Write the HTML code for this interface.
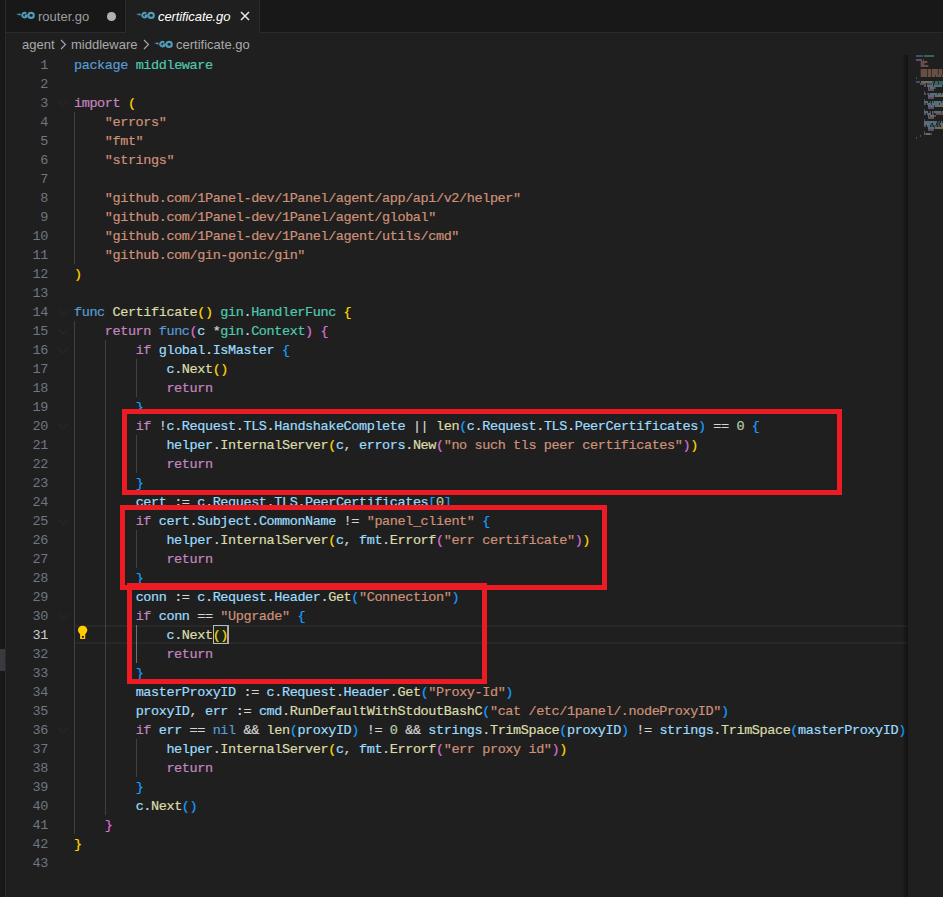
<!DOCTYPE html>
<html><head><meta charset="utf-8">
<style>
html,body{margin:0;padding:0}
body{width:943px;height:897px;overflow:hidden;background:#1f1f1f;position:relative;font-family:"Liberation Sans",sans-serif}
.abs{position:absolute}
#strip{position:absolute;left:0;top:0;width:5px;height:897px;background:#181818}
#stripb{position:absolute;left:5px;top:0;width:1px;height:897px;background:#2b2b2b}
#thumb{position:absolute;left:0;top:649px;width:5px;height:22px;background:#3a3a3e}
#tabs{position:absolute;left:6px;top:0;width:937px;height:32px;background:#181818;border-bottom:1px solid #2b2b2b}
.tab{position:absolute;top:0;height:33px;box-sizing:border-box;border-right:1px solid #2b2b2b}
#t1{left:6px;width:120px;background:#181818;height:32px}
#t2{left:126px;width:134px;background:#1f1f1f}
.tabtxt{position:absolute;top:9px;font-size:13px;line-height:15px;white-space:nowrap}
.go{position:absolute}
.bc{position:absolute;top:37px;font-size:13px;line-height:15px;color:#a9a9a9;white-space:nowrap}
.code{position:absolute;left:0;top:0;font-family:"Liberation Mono",monospace;font-size:13.5px;letter-spacing:-0.4px}
.ln{-webkit-text-stroke:0.2px currentColor;position:absolute;left:74px;height:19px;line-height:19px;white-space:pre;color:#d4d4d4}
.num{position:absolute;left:0;width:48px;text-align:right;height:19px;line-height:19px;color:#6e7681;font-family:"Liberation Mono",monospace;font-size:13.5px;letter-spacing:-0.4px}
.num.act{color:#cccccc}
.guide{position:absolute;width:1px;background:#404040}
.guide.ga{background:#707070}
.k{color:#569cd6}.c{color:#c586c0}.s{color:#ce9178}.f{color:#dcdcaa}.v{color:#9cdcfe}.t{color:#4ec9b0}.o{color:#d4d4d4}.n{color:#b5cea8}.b0{color:#ffd700}.b1{color:#da70d6}.b2{color:#179fff}
.box{position:absolute;border:5px solid #ed1c24;box-sizing:border-box}
</style></head><body>
<svg width="0" height="0" style="position:absolute"><defs><g id="goi"><path d="M0 3.1L4.6 2.5L4.4 4.7Z" fill="#519aba"/><path d="M10.2 2.5A2.35 2.35 0 1 0 10.75 5.1L10.75 4.4L8.7 4.4" stroke="#519aba" stroke-width="2" fill="none"/><ellipse cx="15.1" cy="4.4" rx="2.7" ry="2.5" stroke="#519aba" stroke-width="2.1" fill="none"/></g></defs></svg>
<div id="strip"></div><div id="thumb"></div><div id="stripb"></div>
<div id="tabs"></div>
<div class="tab" id="t1">
  <svg class="go" style="left:10px;top:11px" width="20" height="9" viewBox="0 0 20 9"><use href="#goi"/></svg>
  <div class="tabtxt" style="left:32px;color:#9d9d9d">router.go</div>
  <div class="abs" style="left:101px;top:12px;width:8.5px;height:8.5px;border-radius:50%;background:#b0b0b0"></div>
</div>
<div class="tab" id="t2">
  <svg class="go" style="left:10px;top:11px" width="20" height="9" viewBox="0 0 20 9"><use href="#goi"/></svg>
  <div class="tabtxt" style="left:32px;color:#ffffff;font-style:italic;letter-spacing:-0.1px">certificate.go</div>
  <svg class="abs" style="left:114px;top:11px" width="10" height="10" viewBox="0 0 10 10"><path d="M1 1L9 9M9 1L1 9" stroke="#e8e8e8" stroke-width="1.5"/></svg>
</div>
<div class="bc" style="left:22px">agent</div>
<svg class="abs" style="left:60px;top:39px" width="7" height="11" viewBox="0 0 7 11"><path d="M1 1l4.5 4.5L1 10" stroke="#a9a9a9" fill="none" stroke-width="1.1"/></svg>
<div class="bc" style="left:71px">middleware</div>
<svg class="abs" style="left:143px;top:39px" width="7" height="11" viewBox="0 0 7 11"><path d="M1 1l4.5 4.5L1 10" stroke="#a9a9a9" fill="none" stroke-width="1.1"/></svg>
<svg class="go" style="left:154px;top:40px" width="20" height="9" viewBox="0 0 20 9"><use href="#goi"/></svg>
<div class="bc" style="left:176px">certificate.go</div>

<!-- current line -->
<div class="abs" style="left:74px;top:625px;width:869px;height:19px;box-sizing:border-box;border-top:2px solid #282828;border-bottom:2px solid #282828"></div>
<div class="guide" style="left:74px;top:112px;height:152px"></div>
<div class="guide" style="left:74px;top:321px;height:513px"></div>
<div class="guide" style="left:105px;top:340px;height:475px"></div>
<div class="guide" style="left:136px;top:359px;height:38px"></div>
<div class="guide" style="left:136px;top:435px;height:38px"></div>
<div class="guide" style="left:136px;top:530px;height:38px"></div>
<div class="guide ga" style="left:136px;top:625px;height:38px"></div>
<div class="guide" style="left:136px;top:739px;height:38px"></div>
<svg class="abs" style="left:57px;top:100px" width="12" height="7" viewBox="0 0 12 7"><path d="M1 1l5 5 5-5" stroke="#272727" stroke-width="1.2" fill="none"/></svg>
<svg class="abs" style="left:57px;top:309px" width="12" height="7" viewBox="0 0 12 7"><path d="M1 1l5 5 5-5" stroke="#272727" stroke-width="1.2" fill="none"/></svg>
<svg class="abs" style="left:57px;top:328px" width="12" height="7" viewBox="0 0 12 7"><path d="M1 1l5 5 5-5" stroke="#272727" stroke-width="1.2" fill="none"/></svg>
<svg class="abs" style="left:57px;top:347px" width="12" height="7" viewBox="0 0 12 7"><path d="M1 1l5 5 5-5" stroke="#272727" stroke-width="1.2" fill="none"/></svg>
<svg class="abs" style="left:57px;top:423px" width="12" height="7" viewBox="0 0 12 7"><path d="M1 1l5 5 5-5" stroke="#272727" stroke-width="1.2" fill="none"/></svg>
<svg class="abs" style="left:57px;top:518px" width="12" height="7" viewBox="0 0 12 7"><path d="M1 1l5 5 5-5" stroke="#272727" stroke-width="1.2" fill="none"/></svg>
<svg class="abs" style="left:57px;top:613px" width="12" height="7" viewBox="0 0 12 7"><path d="M1 1l5 5 5-5" stroke="#272727" stroke-width="1.2" fill="none"/></svg>
<svg class="abs" style="left:57px;top:727px" width="12" height="7" viewBox="0 0 12 7"><path d="M1 1l5 5 5-5" stroke="#272727" stroke-width="1.2" fill="none"/></svg>
<div class="abs" style="left:213px;top:625px;width:15px;height:19px;box-sizing:border-box;border:1px solid #b9b9b9;background:rgba(0,100,0,0.1)"></div>
<div class="code">
<div class="num" style="top:56px">1</div>
<div class="num" style="top:75px">2</div>
<div class="num" style="top:94px">3</div>
<div class="num" style="top:113px">4</div>
<div class="num" style="top:132px">5</div>
<div class="num" style="top:151px">6</div>
<div class="num" style="top:170px">7</div>
<div class="num" style="top:189px">8</div>
<div class="num" style="top:208px">9</div>
<div class="num" style="top:227px">10</div>
<div class="num" style="top:246px">11</div>
<div class="num" style="top:265px">12</div>
<div class="num" style="top:284px">13</div>
<div class="num" style="top:303px">14</div>
<div class="num" style="top:322px">15</div>
<div class="num" style="top:341px">16</div>
<div class="num" style="top:360px">17</div>
<div class="num" style="top:379px">18</div>
<div class="num" style="top:398px">19</div>
<div class="num" style="top:417px">20</div>
<div class="num" style="top:436px">21</div>
<div class="num" style="top:455px">22</div>
<div class="num" style="top:474px">23</div>
<div class="num" style="top:493px">24</div>
<div class="num" style="top:512px">25</div>
<div class="num" style="top:531px">26</div>
<div class="num" style="top:550px">27</div>
<div class="num" style="top:569px">28</div>
<div class="num" style="top:588px">29</div>
<div class="num" style="top:607px">30</div>
<div class="num act" style="top:626px">31</div>
<div class="num" style="top:645px">32</div>
<div class="num" style="top:664px">33</div>
<div class="num" style="top:683px">34</div>
<div class="num" style="top:702px">35</div>
<div class="num" style="top:721px">36</div>
<div class="num" style="top:740px">37</div>
<div class="num" style="top:759px">38</div>
<div class="num" style="top:778px">39</div>
<div class="num" style="top:797px">40</div>
<div class="num" style="top:816px">41</div>
<div class="num" style="top:835px">42</div>
<div class="num" style="top:854px">43</div>
<div class="ln" style="top:56px"><span class="k">package</span> <span class="t">middleware</span></div>
<div class="ln" style="top:75px"></div>
<div class="ln" style="top:94px"><span class="c">import</span> <span class="b0">(</span></div>
<div class="ln" style="top:113px">    <span class="s">"errors"</span></div>
<div class="ln" style="top:132px">    <span class="s">"fmt"</span></div>
<div class="ln" style="top:151px">    <span class="s">"strings"</span></div>
<div class="ln" style="top:170px"></div>
<div class="ln" style="top:189px">    <span class="s">"github.com/1Panel-dev/1Panel/agent/app/api/v2/helper"</span></div>
<div class="ln" style="top:208px">    <span class="s">"github.com/1Panel-dev/1Panel/agent/global"</span></div>
<div class="ln" style="top:227px">    <span class="s">"github.com/1Panel-dev/1Panel/agent/utils/cmd"</span></div>
<div class="ln" style="top:246px">    <span class="s">"github.com/gin-gonic/gin"</span></div>
<div class="ln" style="top:265px"><span class="b0">)</span></div>
<div class="ln" style="top:284px"></div>
<div class="ln" style="top:303px"><span class="k">func</span> <span class="f">Certificate</span><span class="b0">(</span><span class="b0">)</span> <span class="t">gin</span><span class="o">.</span><span class="t">HandlerFunc</span> <span class="b0">{</span></div>
<div class="ln" style="top:322px">    <span class="c">return</span> <span class="k">func</span><span class="b1">(</span><span class="v">c</span> <span class="o">*</span><span class="t">gin</span><span class="o">.</span><span class="t">Context</span><span class="b1">)</span> <span class="b1">{</span></div>
<div class="ln" style="top:341px">        <span class="c">if</span> <span class="v">global</span><span class="o">.</span><span class="v">IsMaster</span> <span class="b2">{</span></div>
<div class="ln" style="top:360px">            <span class="v">c</span><span class="o">.</span><span class="f">Next</span><span class="b0">(</span><span class="b0">)</span></div>
<div class="ln" style="top:379px">            <span class="c">return</span></div>
<div class="ln" style="top:398px">        <span class="b2">}</span></div>
<div class="ln" style="top:417px">        <span class="c">if</span> <span class="o">!</span><span class="v">c</span><span class="o">.</span><span class="v">Request</span><span class="o">.</span><span class="v">TLS</span><span class="o">.</span><span class="v">HandshakeComplete</span> <span class="o">||</span> <span class="f">len</span><span class="b2">(</span><span class="v">c</span><span class="o">.</span><span class="v">Request</span><span class="o">.</span><span class="v">TLS</span><span class="o">.</span><span class="v">PeerCertificates</span><span class="b2">)</span> <span class="o">==</span> <span class="n">0</span> <span class="b2">{</span></div>
<div class="ln" style="top:436px">            <span class="v">helper</span><span class="o">.</span><span class="f">InternalServer</span><span class="b0">(</span><span class="v">c</span><span class="o">,</span> <span class="v">errors</span><span class="o">.</span><span class="f">New</span><span class="b1">(</span><span class="s">"no such tls peer certificates"</span><span class="b1">)</span><span class="b0">)</span></div>
<div class="ln" style="top:455px">            <span class="c">return</span></div>
<div class="ln" style="top:474px">        <span class="b2">}</span></div>
<div class="ln" style="top:493px">        <span class="v">cert</span> <span class="o">:=</span> <span class="v">c</span><span class="o">.</span><span class="v">Request</span><span class="o">.</span><span class="v">TLS</span><span class="o">.</span><span class="v">PeerCertificates</span><span class="b2">[</span><span class="n">0</span><span class="b2">]</span></div>
<div class="ln" style="top:512px">        <span class="c">if</span> <span class="v">cert</span><span class="o">.</span><span class="v">Subject</span><span class="o">.</span><span class="v">CommonName</span> <span class="o">!=</span> <span class="s">"panel_client"</span> <span class="b2">{</span></div>
<div class="ln" style="top:531px">            <span class="v">helper</span><span class="o">.</span><span class="f">InternalServer</span><span class="b0">(</span><span class="v">c</span><span class="o">,</span> <span class="v">fmt</span><span class="o">.</span><span class="f">Errorf</span><span class="b1">(</span><span class="s">"err certificate"</span><span class="b1">)</span><span class="b0">)</span></div>
<div class="ln" style="top:550px">            <span class="c">return</span></div>
<div class="ln" style="top:569px">        <span class="b2">}</span></div>
<div class="ln" style="top:588px">        <span class="v">conn</span> <span class="o">:=</span> <span class="v">c</span><span class="o">.</span><span class="v">Request</span><span class="o">.</span><span class="v">Header</span><span class="o">.</span><span class="f">Get</span><span class="b2">(</span><span class="s">"Connection"</span><span class="b2">)</span></div>
<div class="ln" style="top:607px">        <span class="c">if</span> <span class="v">conn</span> <span class="o">==</span> <span class="s">"Upgrade"</span> <span class="b2">{</span></div>
<div class="ln" style="top:626px">            <span class="v">c</span><span class="o">.</span><span class="f">Next</span><span class="b0">(</span><span class="b0">)</span></div>
<div class="ln" style="top:645px">            <span class="c">return</span></div>
<div class="ln" style="top:664px">        <span class="b2">}</span></div>
<div class="ln" style="top:683px">        <span class="v">masterProxyID</span> <span class="o">:=</span> <span class="v">c</span><span class="o">.</span><span class="v">Request</span><span class="o">.</span><span class="v">Header</span><span class="o">.</span><span class="f">Get</span><span class="b2">(</span><span class="s">"Proxy-Id"</span><span class="b2">)</span></div>
<div class="ln" style="top:702px">        <span class="v">proxyID</span><span class="o">,</span> <span class="v">err</span> <span class="o">:=</span> <span class="v">cmd</span><span class="o">.</span><span class="f">RunDefaultWithStdoutBashC</span><span class="b2">(</span><span class="s">"cat /etc/1panel/.nodeProxyID"</span><span class="b2">)</span></div>
<div class="ln" style="top:721px">        <span class="c">if</span> <span class="v">err</span> <span class="o">==</span> <span class="k">nil</span> <span class="o">&amp;&amp;</span> <span class="f">len</span><span class="b2">(</span><span class="v">proxyID</span><span class="b2">)</span> <span class="o">!=</span> <span class="n">0</span> <span class="o">&amp;&amp;</span> <span class="v">strings</span><span class="o">.</span><span class="f">TrimSpace</span><span class="b2">(</span><span class="v">proxyID</span><span class="b2">)</span> <span class="o">!=</span> <span class="v">strings</span><span class="o">.</span><span class="f">TrimSpace</span><span class="b2">(</span><span class="v">masterProxyID</span><span class="b2">)</span> <span class="b2">{</span></div>
<div class="ln" style="top:740px">            <span class="v">helper</span><span class="o">.</span><span class="f">InternalServer</span><span class="b0">(</span><span class="v">c</span><span class="o">,</span> <span class="v">fmt</span><span class="o">.</span><span class="f">Errorf</span><span class="b1">(</span><span class="s">"err proxy id"</span><span class="b1">)</span><span class="b0">)</span></div>
<div class="ln" style="top:759px">            <span class="c">return</span></div>
<div class="ln" style="top:778px">        <span class="b2">}</span></div>
<div class="ln" style="top:797px">        <span class="v">c</span><span class="o">.</span><span class="f">Next</span><span class="b2">(</span><span class="b2">)</span></div>
<div class="ln" style="top:816px">    <span class="b1">}</span></div>
<div class="ln" style="top:835px"><span class="b0">}</span></div>
<div class="ln" style="top:854px"></div>
</div>
<div class="abs" style="left:227px;top:625px;width:2px;height:19px;background:#aeafad"></div>
<svg class="abs" style="left:77px;top:625px" width="11" height="15" viewBox="0 0 11 15"><ellipse cx="5.6" cy="5.1" rx="4.7" ry="4.3" fill="#ffcc00"/><path fill="#ffcc00" fill-rule="evenodd" d="M3.1 7H8.2V14H3.1Z M4.9 11H6.9V12.8H4.9Z"/></svg>
<!-- minimap -->
<div class="abs" style="left:908px;top:55px;width:35px;height:842px;background:#1f1f1f"></div>
<div class="abs" style="left:902px;top:55px;width:6px;height:842px;background:linear-gradient(to right,rgba(0,0,0,0),rgba(0,0,0,0.45))"></div>
<svg class="abs" style="left:0;top:0" width="943" height="897" viewBox="0 0 943 897"><g opacity="0.42"><rect x="916" y="55" width="1" height="2" fill="#569cd6" fill-opacity="1.00"/><rect x="917" y="55" width="1" height="2" fill="#569cd6" fill-opacity="1.00"/><rect x="918" y="55" width="1" height="2" fill="#569cd6" fill-opacity="1.00"/><rect x="919" y="55" width="1" height="2" fill="#569cd6" fill-opacity="1.00"/><rect x="920" y="55" width="1" height="2" fill="#569cd6" fill-opacity="1.00"/><rect x="921" y="55" width="1" height="2" fill="#569cd6" fill-opacity="1.00"/><rect x="922" y="55" width="1" height="2" fill="#569cd6" fill-opacity="1.00"/><rect x="924" y="55" width="1" height="2" fill="#4ec9b0" fill-opacity="1.00"/><rect x="925" y="55" width="1" height="2" fill="#4ec9b0" fill-opacity="1.00"/><rect x="926" y="55" width="1" height="2" fill="#4ec9b0" fill-opacity="1.00"/><rect x="927" y="55" width="1" height="2" fill="#4ec9b0" fill-opacity="1.00"/><rect x="928" y="55" width="1" height="2" fill="#4ec9b0" fill-opacity="1.00"/><rect x="929" y="55" width="1" height="2" fill="#4ec9b0" fill-opacity="1.00"/><rect x="930" y="55" width="1" height="2" fill="#4ec9b0" fill-opacity="1.00"/><rect x="931" y="55" width="1" height="2" fill="#4ec9b0" fill-opacity="1.00"/><rect x="932" y="55" width="1" height="2" fill="#4ec9b0" fill-opacity="1.00"/><rect x="933" y="55" width="1" height="2" fill="#4ec9b0" fill-opacity="1.00"/><rect x="916" y="59" width="1" height="2" fill="#c586c0" fill-opacity="1.00"/><rect x="917" y="59" width="1" height="2" fill="#c586c0" fill-opacity="1.00"/><rect x="918" y="59" width="1" height="2" fill="#c586c0" fill-opacity="1.00"/><rect x="919" y="59" width="1" height="2" fill="#c586c0" fill-opacity="1.00"/><rect x="920" y="59" width="1" height="2" fill="#c586c0" fill-opacity="1.00"/><rect x="921" y="59" width="1" height="2" fill="#c586c0" fill-opacity="1.00"/><rect x="923" y="59" width="1" height="2" fill="#d4d4d4" fill-opacity="0.60"/><rect x="920" y="61" width="1" height="2" fill="#ce9178" fill-opacity="0.35"/><rect x="921" y="61" width="1" height="2" fill="#ce9178" fill-opacity="1.00"/><rect x="922" y="61" width="1" height="2" fill="#ce9178" fill-opacity="1.00"/><rect x="923" y="61" width="1" height="2" fill="#ce9178" fill-opacity="1.00"/><rect x="924" y="61" width="1" height="2" fill="#ce9178" fill-opacity="1.00"/><rect x="925" y="61" width="1" height="2" fill="#ce9178" fill-opacity="1.00"/><rect x="926" y="61" width="1" height="2" fill="#ce9178" fill-opacity="1.00"/><rect x="927" y="61" width="1" height="2" fill="#ce9178" fill-opacity="0.35"/><rect x="920" y="63" width="1" height="2" fill="#ce9178" fill-opacity="0.35"/><rect x="921" y="63" width="1" height="2" fill="#ce9178" fill-opacity="1.00"/><rect x="922" y="63" width="1" height="2" fill="#ce9178" fill-opacity="1.00"/><rect x="923" y="63" width="1" height="2" fill="#ce9178" fill-opacity="1.00"/><rect x="924" y="63" width="1" height="2" fill="#ce9178" fill-opacity="0.35"/><rect x="920" y="65" width="1" height="2" fill="#ce9178" fill-opacity="0.35"/><rect x="921" y="65" width="1" height="2" fill="#ce9178" fill-opacity="1.00"/><rect x="922" y="65" width="1" height="2" fill="#ce9178" fill-opacity="1.00"/><rect x="923" y="65" width="1" height="2" fill="#ce9178" fill-opacity="1.00"/><rect x="924" y="65" width="1" height="2" fill="#ce9178" fill-opacity="1.00"/><rect x="925" y="65" width="1" height="2" fill="#ce9178" fill-opacity="1.00"/><rect x="926" y="65" width="1" height="2" fill="#ce9178" fill-opacity="1.00"/><rect x="927" y="65" width="1" height="2" fill="#ce9178" fill-opacity="1.00"/><rect x="928" y="65" width="1" height="2" fill="#ce9178" fill-opacity="0.35"/><rect x="920" y="69" width="1" height="2" fill="#ce9178" fill-opacity="0.35"/><rect x="921" y="69" width="1" height="2" fill="#ce9178" fill-opacity="1.00"/><rect x="922" y="69" width="1" height="2" fill="#ce9178" fill-opacity="1.00"/><rect x="923" y="69" width="1" height="2" fill="#ce9178" fill-opacity="1.00"/><rect x="924" y="69" width="1" height="2" fill="#ce9178" fill-opacity="1.00"/><rect x="925" y="69" width="1" height="2" fill="#ce9178" fill-opacity="1.00"/><rect x="926" y="69" width="1" height="2" fill="#ce9178" fill-opacity="1.00"/><rect x="927" y="69" width="1" height="2" fill="#ce9178" fill-opacity="0.35"/><rect x="928" y="69" width="1" height="2" fill="#ce9178" fill-opacity="1.00"/><rect x="929" y="69" width="1" height="2" fill="#ce9178" fill-opacity="1.00"/><rect x="930" y="69" width="1" height="2" fill="#ce9178" fill-opacity="1.00"/><rect x="931" y="69" width="1" height="2" fill="#ce9178" fill-opacity="0.35"/><rect x="932" y="69" width="1" height="2" fill="#ce9178" fill-opacity="1.00"/><rect x="933" y="69" width="1" height="2" fill="#ce9178" fill-opacity="1.00"/><rect x="934" y="69" width="1" height="2" fill="#ce9178" fill-opacity="1.00"/><rect x="935" y="69" width="1" height="2" fill="#ce9178" fill-opacity="1.00"/><rect x="936" y="69" width="1" height="2" fill="#ce9178" fill-opacity="1.00"/><rect x="937" y="69" width="1" height="2" fill="#ce9178" fill-opacity="1.00"/><rect x="938" y="69" width="1" height="2" fill="#ce9178" fill-opacity="0.35"/><rect x="939" y="69" width="1" height="2" fill="#ce9178" fill-opacity="1.00"/><rect x="940" y="69" width="1" height="2" fill="#ce9178" fill-opacity="1.00"/><rect x="941" y="69" width="1" height="2" fill="#ce9178" fill-opacity="1.00"/><rect x="942" y="69" width="1" height="2" fill="#ce9178" fill-opacity="0.35"/><rect x="920" y="71" width="1" height="2" fill="#ce9178" fill-opacity="0.35"/><rect x="921" y="71" width="1" height="2" fill="#ce9178" fill-opacity="1.00"/><rect x="922" y="71" width="1" height="2" fill="#ce9178" fill-opacity="1.00"/><rect x="923" y="71" width="1" height="2" fill="#ce9178" fill-opacity="1.00"/><rect x="924" y="71" width="1" height="2" fill="#ce9178" fill-opacity="1.00"/><rect x="925" y="71" width="1" height="2" fill="#ce9178" fill-opacity="1.00"/><rect x="926" y="71" width="1" height="2" fill="#ce9178" fill-opacity="1.00"/><rect x="927" y="71" width="1" height="2" fill="#ce9178" fill-opacity="0.35"/><rect x="928" y="71" width="1" height="2" fill="#ce9178" fill-opacity="1.00"/><rect x="929" y="71" width="1" height="2" fill="#ce9178" fill-opacity="1.00"/><rect x="930" y="71" width="1" height="2" fill="#ce9178" fill-opacity="1.00"/><rect x="931" y="71" width="1" height="2" fill="#ce9178" fill-opacity="0.35"/><rect x="932" y="71" width="1" height="2" fill="#ce9178" fill-opacity="1.00"/><rect x="933" y="71" width="1" height="2" fill="#ce9178" fill-opacity="1.00"/><rect x="934" y="71" width="1" height="2" fill="#ce9178" fill-opacity="1.00"/><rect x="935" y="71" width="1" height="2" fill="#ce9178" fill-opacity="1.00"/><rect x="936" y="71" width="1" height="2" fill="#ce9178" fill-opacity="1.00"/><rect x="937" y="71" width="1" height="2" fill="#ce9178" fill-opacity="1.00"/><rect x="938" y="71" width="1" height="2" fill="#ce9178" fill-opacity="0.35"/><rect x="939" y="71" width="1" height="2" fill="#ce9178" fill-opacity="1.00"/><rect x="940" y="71" width="1" height="2" fill="#ce9178" fill-opacity="1.00"/><rect x="941" y="71" width="1" height="2" fill="#ce9178" fill-opacity="1.00"/><rect x="942" y="71" width="1" height="2" fill="#ce9178" fill-opacity="0.35"/><rect x="920" y="73" width="1" height="2" fill="#ce9178" fill-opacity="0.35"/><rect x="921" y="73" width="1" height="2" fill="#ce9178" fill-opacity="1.00"/><rect x="922" y="73" width="1" height="2" fill="#ce9178" fill-opacity="1.00"/><rect x="923" y="73" width="1" height="2" fill="#ce9178" fill-opacity="1.00"/><rect x="924" y="73" width="1" height="2" fill="#ce9178" fill-opacity="1.00"/><rect x="925" y="73" width="1" height="2" fill="#ce9178" fill-opacity="1.00"/><rect x="926" y="73" width="1" height="2" fill="#ce9178" fill-opacity="1.00"/><rect x="927" y="73" width="1" height="2" fill="#ce9178" fill-opacity="0.35"/><rect x="928" y="73" width="1" height="2" fill="#ce9178" fill-opacity="1.00"/><rect x="929" y="73" width="1" height="2" fill="#ce9178" fill-opacity="1.00"/><rect x="930" y="73" width="1" height="2" fill="#ce9178" fill-opacity="1.00"/><rect x="931" y="73" width="1" height="2" fill="#ce9178" fill-opacity="0.35"/><rect x="932" y="73" width="1" height="2" fill="#ce9178" fill-opacity="1.00"/><rect x="933" y="73" width="1" height="2" fill="#ce9178" fill-opacity="1.00"/><rect x="934" y="73" width="1" height="2" fill="#ce9178" fill-opacity="1.00"/><rect x="935" y="73" width="1" height="2" fill="#ce9178" fill-opacity="1.00"/><rect x="936" y="73" width="1" height="2" fill="#ce9178" fill-opacity="1.00"/><rect x="937" y="73" width="1" height="2" fill="#ce9178" fill-opacity="1.00"/><rect x="938" y="73" width="1" height="2" fill="#ce9178" fill-opacity="0.35"/><rect x="939" y="73" width="1" height="2" fill="#ce9178" fill-opacity="1.00"/><rect x="940" y="73" width="1" height="2" fill="#ce9178" fill-opacity="1.00"/><rect x="941" y="73" width="1" height="2" fill="#ce9178" fill-opacity="1.00"/><rect x="942" y="73" width="1" height="2" fill="#ce9178" fill-opacity="0.35"/><rect x="920" y="75" width="1" height="2" fill="#ce9178" fill-opacity="0.35"/><rect x="921" y="75" width="1" height="2" fill="#ce9178" fill-opacity="1.00"/><rect x="922" y="75" width="1" height="2" fill="#ce9178" fill-opacity="1.00"/><rect x="923" y="75" width="1" height="2" fill="#ce9178" fill-opacity="1.00"/><rect x="924" y="75" width="1" height="2" fill="#ce9178" fill-opacity="1.00"/><rect x="925" y="75" width="1" height="2" fill="#ce9178" fill-opacity="1.00"/><rect x="926" y="75" width="1" height="2" fill="#ce9178" fill-opacity="1.00"/><rect x="927" y="75" width="1" height="2" fill="#ce9178" fill-opacity="0.35"/><rect x="928" y="75" width="1" height="2" fill="#ce9178" fill-opacity="1.00"/><rect x="929" y="75" width="1" height="2" fill="#ce9178" fill-opacity="1.00"/><rect x="930" y="75" width="1" height="2" fill="#ce9178" fill-opacity="1.00"/><rect x="931" y="75" width="1" height="2" fill="#ce9178" fill-opacity="0.35"/><rect x="932" y="75" width="1" height="2" fill="#ce9178" fill-opacity="1.00"/><rect x="933" y="75" width="1" height="2" fill="#ce9178" fill-opacity="1.00"/><rect x="934" y="75" width="1" height="2" fill="#ce9178" fill-opacity="1.00"/><rect x="935" y="75" width="1" height="2" fill="#ce9178" fill-opacity="0.35"/><rect x="936" y="75" width="1" height="2" fill="#ce9178" fill-opacity="1.00"/><rect x="937" y="75" width="1" height="2" fill="#ce9178" fill-opacity="1.00"/><rect x="938" y="75" width="1" height="2" fill="#ce9178" fill-opacity="1.00"/><rect x="939" y="75" width="1" height="2" fill="#ce9178" fill-opacity="1.00"/><rect x="940" y="75" width="1" height="2" fill="#ce9178" fill-opacity="1.00"/><rect x="941" y="75" width="1" height="2" fill="#ce9178" fill-opacity="0.35"/><rect x="942" y="75" width="1" height="2" fill="#ce9178" fill-opacity="1.00"/><rect x="916" y="77" width="1" height="2" fill="#d4d4d4" fill-opacity="0.60"/><rect x="916" y="81" width="1" height="2" fill="#569cd6" fill-opacity="1.00"/><rect x="917" y="81" width="1" height="2" fill="#569cd6" fill-opacity="1.00"/><rect x="918" y="81" width="1" height="2" fill="#569cd6" fill-opacity="1.00"/><rect x="919" y="81" width="1" height="2" fill="#569cd6" fill-opacity="1.00"/><rect x="921" y="81" width="1" height="2" fill="#dcdcaa" fill-opacity="1.00"/><rect x="922" y="81" width="1" height="2" fill="#dcdcaa" fill-opacity="1.00"/><rect x="923" y="81" width="1" height="2" fill="#dcdcaa" fill-opacity="1.00"/><rect x="924" y="81" width="1" height="2" fill="#dcdcaa" fill-opacity="1.00"/><rect x="925" y="81" width="1" height="2" fill="#dcdcaa" fill-opacity="1.00"/><rect x="926" y="81" width="1" height="2" fill="#dcdcaa" fill-opacity="1.00"/><rect x="927" y="81" width="1" height="2" fill="#dcdcaa" fill-opacity="1.00"/><rect x="928" y="81" width="1" height="2" fill="#dcdcaa" fill-opacity="1.00"/><rect x="929" y="81" width="1" height="2" fill="#dcdcaa" fill-opacity="1.00"/><rect x="930" y="81" width="1" height="2" fill="#dcdcaa" fill-opacity="1.00"/><rect x="931" y="81" width="1" height="2" fill="#dcdcaa" fill-opacity="1.00"/><rect x="932" y="81" width="1" height="2" fill="#d4d4d4" fill-opacity="0.60"/><rect x="933" y="81" width="1" height="2" fill="#d4d4d4" fill-opacity="0.60"/><rect x="935" y="81" width="1" height="2" fill="#4ec9b0" fill-opacity="1.00"/><rect x="936" y="81" width="1" height="2" fill="#4ec9b0" fill-opacity="1.00"/><rect x="937" y="81" width="1" height="2" fill="#4ec9b0" fill-opacity="1.00"/><rect x="938" y="81" width="1" height="2" fill="#d4d4d4" fill-opacity="0.35"/><rect x="939" y="81" width="1" height="2" fill="#4ec9b0" fill-opacity="1.00"/><rect x="940" y="81" width="1" height="2" fill="#4ec9b0" fill-opacity="1.00"/><rect x="941" y="81" width="1" height="2" fill="#4ec9b0" fill-opacity="1.00"/><rect x="942" y="81" width="1" height="2" fill="#4ec9b0" fill-opacity="1.00"/><rect x="920" y="83" width="1" height="2" fill="#c586c0" fill-opacity="1.00"/><rect x="921" y="83" width="1" height="2" fill="#c586c0" fill-opacity="1.00"/><rect x="922" y="83" width="1" height="2" fill="#c586c0" fill-opacity="1.00"/><rect x="923" y="83" width="1" height="2" fill="#c586c0" fill-opacity="1.00"/><rect x="924" y="83" width="1" height="2" fill="#c586c0" fill-opacity="1.00"/><rect x="925" y="83" width="1" height="2" fill="#c586c0" fill-opacity="1.00"/><rect x="927" y="83" width="1" height="2" fill="#569cd6" fill-opacity="1.00"/><rect x="928" y="83" width="1" height="2" fill="#569cd6" fill-opacity="1.00"/><rect x="929" y="83" width="1" height="2" fill="#569cd6" fill-opacity="1.00"/><rect x="930" y="83" width="1" height="2" fill="#569cd6" fill-opacity="1.00"/><rect x="931" y="83" width="1" height="2" fill="#d4d4d4" fill-opacity="0.60"/><rect x="932" y="83" width="1" height="2" fill="#9cdcfe" fill-opacity="1.00"/><rect x="934" y="83" width="1" height="2" fill="#d4d4d4" fill-opacity="0.60"/><rect x="935" y="83" width="1" height="2" fill="#4ec9b0" fill-opacity="1.00"/><rect x="936" y="83" width="1" height="2" fill="#4ec9b0" fill-opacity="1.00"/><rect x="937" y="83" width="1" height="2" fill="#4ec9b0" fill-opacity="1.00"/><rect x="938" y="83" width="1" height="2" fill="#d4d4d4" fill-opacity="0.35"/><rect x="939" y="83" width="1" height="2" fill="#4ec9b0" fill-opacity="1.00"/><rect x="940" y="83" width="1" height="2" fill="#4ec9b0" fill-opacity="1.00"/><rect x="941" y="83" width="1" height="2" fill="#4ec9b0" fill-opacity="1.00"/><rect x="942" y="83" width="1" height="2" fill="#4ec9b0" fill-opacity="1.00"/><rect x="924" y="85" width="1" height="2" fill="#c586c0" fill-opacity="1.00"/><rect x="925" y="85" width="1" height="2" fill="#c586c0" fill-opacity="1.00"/><rect x="927" y="85" width="1" height="2" fill="#9cdcfe" fill-opacity="1.00"/><rect x="928" y="85" width="1" height="2" fill="#9cdcfe" fill-opacity="1.00"/><rect x="929" y="85" width="1" height="2" fill="#9cdcfe" fill-opacity="1.00"/><rect x="930" y="85" width="1" height="2" fill="#9cdcfe" fill-opacity="1.00"/><rect x="931" y="85" width="1" height="2" fill="#9cdcfe" fill-opacity="1.00"/><rect x="932" y="85" width="1" height="2" fill="#9cdcfe" fill-opacity="1.00"/><rect x="933" y="85" width="1" height="2" fill="#d4d4d4" fill-opacity="0.35"/><rect x="934" y="85" width="1" height="2" fill="#9cdcfe" fill-opacity="1.00"/><rect x="935" y="85" width="1" height="2" fill="#9cdcfe" fill-opacity="1.00"/><rect x="936" y="85" width="1" height="2" fill="#9cdcfe" fill-opacity="1.00"/><rect x="937" y="85" width="1" height="2" fill="#9cdcfe" fill-opacity="1.00"/><rect x="938" y="85" width="1" height="2" fill="#9cdcfe" fill-opacity="1.00"/><rect x="939" y="85" width="1" height="2" fill="#9cdcfe" fill-opacity="1.00"/><rect x="940" y="85" width="1" height="2" fill="#9cdcfe" fill-opacity="1.00"/><rect x="941" y="85" width="1" height="2" fill="#9cdcfe" fill-opacity="1.00"/><rect x="928" y="87" width="1" height="2" fill="#9cdcfe" fill-opacity="1.00"/><rect x="929" y="87" width="1" height="2" fill="#d4d4d4" fill-opacity="0.35"/><rect x="930" y="87" width="1" height="2" fill="#dcdcaa" fill-opacity="1.00"/><rect x="931" y="87" width="1" height="2" fill="#dcdcaa" fill-opacity="1.00"/><rect x="932" y="87" width="1" height="2" fill="#dcdcaa" fill-opacity="1.00"/><rect x="933" y="87" width="1" height="2" fill="#dcdcaa" fill-opacity="1.00"/><rect x="934" y="87" width="1" height="2" fill="#d4d4d4" fill-opacity="0.60"/><rect x="935" y="87" width="1" height="2" fill="#d4d4d4" fill-opacity="0.60"/><rect x="928" y="89" width="1" height="2" fill="#c586c0" fill-opacity="1.00"/><rect x="929" y="89" width="1" height="2" fill="#c586c0" fill-opacity="1.00"/><rect x="930" y="89" width="1" height="2" fill="#c586c0" fill-opacity="1.00"/><rect x="931" y="89" width="1" height="2" fill="#c586c0" fill-opacity="1.00"/><rect x="932" y="89" width="1" height="2" fill="#c586c0" fill-opacity="1.00"/><rect x="933" y="89" width="1" height="2" fill="#c586c0" fill-opacity="1.00"/><rect x="924" y="91" width="1" height="2" fill="#d4d4d4" fill-opacity="0.60"/><rect x="924" y="93" width="1" height="2" fill="#c586c0" fill-opacity="1.00"/><rect x="925" y="93" width="1" height="2" fill="#c586c0" fill-opacity="1.00"/><rect x="927" y="93" width="1" height="2" fill="#d4d4d4" fill-opacity="0.60"/><rect x="928" y="93" width="1" height="2" fill="#9cdcfe" fill-opacity="1.00"/><rect x="929" y="93" width="1" height="2" fill="#d4d4d4" fill-opacity="0.35"/><rect x="930" y="93" width="1" height="2" fill="#9cdcfe" fill-opacity="1.00"/><rect x="931" y="93" width="1" height="2" fill="#9cdcfe" fill-opacity="1.00"/><rect x="932" y="93" width="1" height="2" fill="#9cdcfe" fill-opacity="1.00"/><rect x="933" y="93" width="1" height="2" fill="#9cdcfe" fill-opacity="1.00"/><rect x="934" y="93" width="1" height="2" fill="#9cdcfe" fill-opacity="1.00"/><rect x="935" y="93" width="1" height="2" fill="#9cdcfe" fill-opacity="1.00"/><rect x="936" y="93" width="1" height="2" fill="#9cdcfe" fill-opacity="1.00"/><rect x="937" y="93" width="1" height="2" fill="#d4d4d4" fill-opacity="0.35"/><rect x="938" y="93" width="1" height="2" fill="#9cdcfe" fill-opacity="1.00"/><rect x="939" y="93" width="1" height="2" fill="#9cdcfe" fill-opacity="1.00"/><rect x="940" y="93" width="1" height="2" fill="#9cdcfe" fill-opacity="1.00"/><rect x="941" y="93" width="1" height="2" fill="#d4d4d4" fill-opacity="0.35"/><rect x="942" y="93" width="1" height="2" fill="#9cdcfe" fill-opacity="1.00"/><rect x="928" y="95" width="1" height="2" fill="#9cdcfe" fill-opacity="1.00"/><rect x="929" y="95" width="1" height="2" fill="#9cdcfe" fill-opacity="1.00"/><rect x="930" y="95" width="1" height="2" fill="#9cdcfe" fill-opacity="1.00"/><rect x="931" y="95" width="1" height="2" fill="#9cdcfe" fill-opacity="1.00"/><rect x="932" y="95" width="1" height="2" fill="#9cdcfe" fill-opacity="1.00"/><rect x="933" y="95" width="1" height="2" fill="#9cdcfe" fill-opacity="1.00"/><rect x="934" y="95" width="1" height="2" fill="#d4d4d4" fill-opacity="0.35"/><rect x="935" y="95" width="1" height="2" fill="#dcdcaa" fill-opacity="1.00"/><rect x="936" y="95" width="1" height="2" fill="#dcdcaa" fill-opacity="1.00"/><rect x="937" y="95" width="1" height="2" fill="#dcdcaa" fill-opacity="1.00"/><rect x="938" y="95" width="1" height="2" fill="#dcdcaa" fill-opacity="1.00"/><rect x="939" y="95" width="1" height="2" fill="#dcdcaa" fill-opacity="1.00"/><rect x="940" y="95" width="1" height="2" fill="#dcdcaa" fill-opacity="1.00"/><rect x="941" y="95" width="1" height="2" fill="#dcdcaa" fill-opacity="1.00"/><rect x="942" y="95" width="1" height="2" fill="#dcdcaa" fill-opacity="1.00"/><rect x="928" y="97" width="1" height="2" fill="#c586c0" fill-opacity="1.00"/><rect x="929" y="97" width="1" height="2" fill="#c586c0" fill-opacity="1.00"/><rect x="930" y="97" width="1" height="2" fill="#c586c0" fill-opacity="1.00"/><rect x="931" y="97" width="1" height="2" fill="#c586c0" fill-opacity="1.00"/><rect x="932" y="97" width="1" height="2" fill="#c586c0" fill-opacity="1.00"/><rect x="933" y="97" width="1" height="2" fill="#c586c0" fill-opacity="1.00"/><rect x="924" y="99" width="1" height="2" fill="#d4d4d4" fill-opacity="0.60"/><rect x="924" y="101" width="1" height="2" fill="#9cdcfe" fill-opacity="1.00"/><rect x="925" y="101" width="1" height="2" fill="#9cdcfe" fill-opacity="1.00"/><rect x="926" y="101" width="1" height="2" fill="#9cdcfe" fill-opacity="1.00"/><rect x="927" y="101" width="1" height="2" fill="#9cdcfe" fill-opacity="1.00"/><rect x="929" y="101" width="1" height="2" fill="#d4d4d4" fill-opacity="0.35"/><rect x="930" y="101" width="1" height="2" fill="#d4d4d4" fill-opacity="0.60"/><rect x="932" y="101" width="1" height="2" fill="#9cdcfe" fill-opacity="1.00"/><rect x="933" y="101" width="1" height="2" fill="#d4d4d4" fill-opacity="0.35"/><rect x="934" y="101" width="1" height="2" fill="#9cdcfe" fill-opacity="1.00"/><rect x="935" y="101" width="1" height="2" fill="#9cdcfe" fill-opacity="1.00"/><rect x="936" y="101" width="1" height="2" fill="#9cdcfe" fill-opacity="1.00"/><rect x="937" y="101" width="1" height="2" fill="#9cdcfe" fill-opacity="1.00"/><rect x="938" y="101" width="1" height="2" fill="#9cdcfe" fill-opacity="1.00"/><rect x="939" y="101" width="1" height="2" fill="#9cdcfe" fill-opacity="1.00"/><rect x="940" y="101" width="1" height="2" fill="#9cdcfe" fill-opacity="1.00"/><rect x="941" y="101" width="1" height="2" fill="#d4d4d4" fill-opacity="0.35"/><rect x="942" y="101" width="1" height="2" fill="#9cdcfe" fill-opacity="1.00"/><rect x="924" y="103" width="1" height="2" fill="#c586c0" fill-opacity="1.00"/><rect x="925" y="103" width="1" height="2" fill="#c586c0" fill-opacity="1.00"/><rect x="927" y="103" width="1" height="2" fill="#9cdcfe" fill-opacity="1.00"/><rect x="928" y="103" width="1" height="2" fill="#9cdcfe" fill-opacity="1.00"/><rect x="929" y="103" width="1" height="2" fill="#9cdcfe" fill-opacity="1.00"/><rect x="930" y="103" width="1" height="2" fill="#9cdcfe" fill-opacity="1.00"/><rect x="931" y="103" width="1" height="2" fill="#d4d4d4" fill-opacity="0.35"/><rect x="932" y="103" width="1" height="2" fill="#9cdcfe" fill-opacity="1.00"/><rect x="933" y="103" width="1" height="2" fill="#9cdcfe" fill-opacity="1.00"/><rect x="934" y="103" width="1" height="2" fill="#9cdcfe" fill-opacity="1.00"/><rect x="935" y="103" width="1" height="2" fill="#9cdcfe" fill-opacity="1.00"/><rect x="936" y="103" width="1" height="2" fill="#9cdcfe" fill-opacity="1.00"/><rect x="937" y="103" width="1" height="2" fill="#9cdcfe" fill-opacity="1.00"/><rect x="938" y="103" width="1" height="2" fill="#9cdcfe" fill-opacity="1.00"/><rect x="939" y="103" width="1" height="2" fill="#d4d4d4" fill-opacity="0.35"/><rect x="940" y="103" width="1" height="2" fill="#9cdcfe" fill-opacity="1.00"/><rect x="941" y="103" width="1" height="2" fill="#9cdcfe" fill-opacity="1.00"/><rect x="942" y="103" width="1" height="2" fill="#9cdcfe" fill-opacity="1.00"/><rect x="928" y="105" width="1" height="2" fill="#9cdcfe" fill-opacity="1.00"/><rect x="929" y="105" width="1" height="2" fill="#9cdcfe" fill-opacity="1.00"/><rect x="930" y="105" width="1" height="2" fill="#9cdcfe" fill-opacity="1.00"/><rect x="931" y="105" width="1" height="2" fill="#9cdcfe" fill-opacity="1.00"/><rect x="932" y="105" width="1" height="2" fill="#9cdcfe" fill-opacity="1.00"/><rect x="933" y="105" width="1" height="2" fill="#9cdcfe" fill-opacity="1.00"/><rect x="934" y="105" width="1" height="2" fill="#d4d4d4" fill-opacity="0.35"/><rect x="935" y="105" width="1" height="2" fill="#dcdcaa" fill-opacity="1.00"/><rect x="936" y="105" width="1" height="2" fill="#dcdcaa" fill-opacity="1.00"/><rect x="937" y="105" width="1" height="2" fill="#dcdcaa" fill-opacity="1.00"/><rect x="938" y="105" width="1" height="2" fill="#dcdcaa" fill-opacity="1.00"/><rect x="939" y="105" width="1" height="2" fill="#dcdcaa" fill-opacity="1.00"/><rect x="940" y="105" width="1" height="2" fill="#dcdcaa" fill-opacity="1.00"/><rect x="941" y="105" width="1" height="2" fill="#dcdcaa" fill-opacity="1.00"/><rect x="942" y="105" width="1" height="2" fill="#dcdcaa" fill-opacity="1.00"/><rect x="928" y="107" width="1" height="2" fill="#c586c0" fill-opacity="1.00"/><rect x="929" y="107" width="1" height="2" fill="#c586c0" fill-opacity="1.00"/><rect x="930" y="107" width="1" height="2" fill="#c586c0" fill-opacity="1.00"/><rect x="931" y="107" width="1" height="2" fill="#c586c0" fill-opacity="1.00"/><rect x="932" y="107" width="1" height="2" fill="#c586c0" fill-opacity="1.00"/><rect x="933" y="107" width="1" height="2" fill="#c586c0" fill-opacity="1.00"/><rect x="924" y="109" width="1" height="2" fill="#d4d4d4" fill-opacity="0.60"/><rect x="924" y="111" width="1" height="2" fill="#9cdcfe" fill-opacity="1.00"/><rect x="925" y="111" width="1" height="2" fill="#9cdcfe" fill-opacity="1.00"/><rect x="926" y="111" width="1" height="2" fill="#9cdcfe" fill-opacity="1.00"/><rect x="927" y="111" width="1" height="2" fill="#9cdcfe" fill-opacity="1.00"/><rect x="929" y="111" width="1" height="2" fill="#d4d4d4" fill-opacity="0.35"/><rect x="930" y="111" width="1" height="2" fill="#d4d4d4" fill-opacity="0.60"/><rect x="932" y="111" width="1" height="2" fill="#9cdcfe" fill-opacity="1.00"/><rect x="933" y="111" width="1" height="2" fill="#d4d4d4" fill-opacity="0.35"/><rect x="934" y="111" width="1" height="2" fill="#9cdcfe" fill-opacity="1.00"/><rect x="935" y="111" width="1" height="2" fill="#9cdcfe" fill-opacity="1.00"/><rect x="936" y="111" width="1" height="2" fill="#9cdcfe" fill-opacity="1.00"/><rect x="937" y="111" width="1" height="2" fill="#9cdcfe" fill-opacity="1.00"/><rect x="938" y="111" width="1" height="2" fill="#9cdcfe" fill-opacity="1.00"/><rect x="939" y="111" width="1" height="2" fill="#9cdcfe" fill-opacity="1.00"/><rect x="940" y="111" width="1" height="2" fill="#9cdcfe" fill-opacity="1.00"/><rect x="941" y="111" width="1" height="2" fill="#d4d4d4" fill-opacity="0.35"/><rect x="942" y="111" width="1" height="2" fill="#9cdcfe" fill-opacity="1.00"/><rect x="924" y="113" width="1" height="2" fill="#c586c0" fill-opacity="1.00"/><rect x="925" y="113" width="1" height="2" fill="#c586c0" fill-opacity="1.00"/><rect x="927" y="113" width="1" height="2" fill="#9cdcfe" fill-opacity="1.00"/><rect x="928" y="113" width="1" height="2" fill="#9cdcfe" fill-opacity="1.00"/><rect x="929" y="113" width="1" height="2" fill="#9cdcfe" fill-opacity="1.00"/><rect x="930" y="113" width="1" height="2" fill="#9cdcfe" fill-opacity="1.00"/><rect x="932" y="113" width="1" height="2" fill="#d4d4d4" fill-opacity="0.60"/><rect x="933" y="113" width="1" height="2" fill="#d4d4d4" fill-opacity="0.60"/><rect x="935" y="113" width="1" height="2" fill="#ce9178" fill-opacity="0.35"/><rect x="936" y="113" width="1" height="2" fill="#ce9178" fill-opacity="1.00"/><rect x="937" y="113" width="1" height="2" fill="#ce9178" fill-opacity="1.00"/><rect x="938" y="113" width="1" height="2" fill="#ce9178" fill-opacity="1.00"/><rect x="939" y="113" width="1" height="2" fill="#ce9178" fill-opacity="1.00"/><rect x="940" y="113" width="1" height="2" fill="#ce9178" fill-opacity="1.00"/><rect x="941" y="113" width="1" height="2" fill="#ce9178" fill-opacity="1.00"/><rect x="942" y="113" width="1" height="2" fill="#ce9178" fill-opacity="1.00"/><rect x="928" y="115" width="1" height="2" fill="#9cdcfe" fill-opacity="1.00"/><rect x="929" y="115" width="1" height="2" fill="#d4d4d4" fill-opacity="0.35"/><rect x="930" y="115" width="1" height="2" fill="#dcdcaa" fill-opacity="1.00"/><rect x="931" y="115" width="1" height="2" fill="#dcdcaa" fill-opacity="1.00"/><rect x="932" y="115" width="1" height="2" fill="#dcdcaa" fill-opacity="1.00"/><rect x="933" y="115" width="1" height="2" fill="#dcdcaa" fill-opacity="1.00"/><rect x="934" y="115" width="1" height="2" fill="#d4d4d4" fill-opacity="0.60"/><rect x="935" y="115" width="1" height="2" fill="#d4d4d4" fill-opacity="0.60"/><rect x="928" y="117" width="1" height="2" fill="#c586c0" fill-opacity="1.00"/><rect x="929" y="117" width="1" height="2" fill="#c586c0" fill-opacity="1.00"/><rect x="930" y="117" width="1" height="2" fill="#c586c0" fill-opacity="1.00"/><rect x="931" y="117" width="1" height="2" fill="#c586c0" fill-opacity="1.00"/><rect x="932" y="117" width="1" height="2" fill="#c586c0" fill-opacity="1.00"/><rect x="933" y="117" width="1" height="2" fill="#c586c0" fill-opacity="1.00"/><rect x="924" y="119" width="1" height="2" fill="#d4d4d4" fill-opacity="0.60"/><rect x="924" y="121" width="1" height="2" fill="#9cdcfe" fill-opacity="1.00"/><rect x="925" y="121" width="1" height="2" fill="#9cdcfe" fill-opacity="1.00"/><rect x="926" y="121" width="1" height="2" fill="#9cdcfe" fill-opacity="1.00"/><rect x="927" y="121" width="1" height="2" fill="#9cdcfe" fill-opacity="1.00"/><rect x="928" y="121" width="1" height="2" fill="#9cdcfe" fill-opacity="1.00"/><rect x="929" y="121" width="1" height="2" fill="#9cdcfe" fill-opacity="1.00"/><rect x="930" y="121" width="1" height="2" fill="#9cdcfe" fill-opacity="1.00"/><rect x="931" y="121" width="1" height="2" fill="#9cdcfe" fill-opacity="1.00"/><rect x="932" y="121" width="1" height="2" fill="#9cdcfe" fill-opacity="1.00"/><rect x="933" y="121" width="1" height="2" fill="#9cdcfe" fill-opacity="1.00"/><rect x="934" y="121" width="1" height="2" fill="#9cdcfe" fill-opacity="1.00"/><rect x="935" y="121" width="1" height="2" fill="#9cdcfe" fill-opacity="1.00"/><rect x="936" y="121" width="1" height="2" fill="#9cdcfe" fill-opacity="1.00"/><rect x="938" y="121" width="1" height="2" fill="#d4d4d4" fill-opacity="0.35"/><rect x="939" y="121" width="1" height="2" fill="#d4d4d4" fill-opacity="0.60"/><rect x="941" y="121" width="1" height="2" fill="#9cdcfe" fill-opacity="1.00"/><rect x="942" y="121" width="1" height="2" fill="#d4d4d4" fill-opacity="0.35"/><rect x="924" y="123" width="1" height="2" fill="#9cdcfe" fill-opacity="1.00"/><rect x="925" y="123" width="1" height="2" fill="#9cdcfe" fill-opacity="1.00"/><rect x="926" y="123" width="1" height="2" fill="#9cdcfe" fill-opacity="1.00"/><rect x="927" y="123" width="1" height="2" fill="#9cdcfe" fill-opacity="1.00"/><rect x="928" y="123" width="1" height="2" fill="#9cdcfe" fill-opacity="1.00"/><rect x="929" y="123" width="1" height="2" fill="#9cdcfe" fill-opacity="1.00"/><rect x="930" y="123" width="1" height="2" fill="#9cdcfe" fill-opacity="1.00"/><rect x="931" y="123" width="1" height="2" fill="#d4d4d4" fill-opacity="0.35"/><rect x="933" y="123" width="1" height="2" fill="#9cdcfe" fill-opacity="1.00"/><rect x="934" y="123" width="1" height="2" fill="#9cdcfe" fill-opacity="1.00"/><rect x="935" y="123" width="1" height="2" fill="#9cdcfe" fill-opacity="1.00"/><rect x="937" y="123" width="1" height="2" fill="#d4d4d4" fill-opacity="0.35"/><rect x="938" y="123" width="1" height="2" fill="#d4d4d4" fill-opacity="0.60"/><rect x="940" y="123" width="1" height="2" fill="#9cdcfe" fill-opacity="1.00"/><rect x="941" y="123" width="1" height="2" fill="#9cdcfe" fill-opacity="1.00"/><rect x="942" y="123" width="1" height="2" fill="#9cdcfe" fill-opacity="1.00"/><rect x="924" y="125" width="1" height="2" fill="#c586c0" fill-opacity="1.00"/><rect x="925" y="125" width="1" height="2" fill="#c586c0" fill-opacity="1.00"/><rect x="927" y="125" width="1" height="2" fill="#9cdcfe" fill-opacity="1.00"/><rect x="928" y="125" width="1" height="2" fill="#9cdcfe" fill-opacity="1.00"/><rect x="929" y="125" width="1" height="2" fill="#9cdcfe" fill-opacity="1.00"/><rect x="931" y="125" width="1" height="2" fill="#d4d4d4" fill-opacity="0.60"/><rect x="932" y="125" width="1" height="2" fill="#d4d4d4" fill-opacity="0.60"/><rect x="934" y="125" width="1" height="2" fill="#569cd6" fill-opacity="1.00"/><rect x="935" y="125" width="1" height="2" fill="#569cd6" fill-opacity="1.00"/><rect x="936" y="125" width="1" height="2" fill="#569cd6" fill-opacity="1.00"/><rect x="938" y="125" width="1" height="2" fill="#d4d4d4" fill-opacity="0.60"/><rect x="939" y="125" width="1" height="2" fill="#d4d4d4" fill-opacity="0.60"/><rect x="941" y="125" width="1" height="2" fill="#dcdcaa" fill-opacity="1.00"/><rect x="942" y="125" width="1" height="2" fill="#dcdcaa" fill-opacity="1.00"/><rect x="928" y="127" width="1" height="2" fill="#9cdcfe" fill-opacity="1.00"/><rect x="929" y="127" width="1" height="2" fill="#9cdcfe" fill-opacity="1.00"/><rect x="930" y="127" width="1" height="2" fill="#9cdcfe" fill-opacity="1.00"/><rect x="931" y="127" width="1" height="2" fill="#9cdcfe" fill-opacity="1.00"/><rect x="932" y="127" width="1" height="2" fill="#9cdcfe" fill-opacity="1.00"/><rect x="933" y="127" width="1" height="2" fill="#9cdcfe" fill-opacity="1.00"/><rect x="934" y="127" width="1" height="2" fill="#d4d4d4" fill-opacity="0.35"/><rect x="935" y="127" width="1" height="2" fill="#dcdcaa" fill-opacity="1.00"/><rect x="936" y="127" width="1" height="2" fill="#dcdcaa" fill-opacity="1.00"/><rect x="937" y="127" width="1" height="2" fill="#dcdcaa" fill-opacity="1.00"/><rect x="938" y="127" width="1" height="2" fill="#dcdcaa" fill-opacity="1.00"/><rect x="939" y="127" width="1" height="2" fill="#dcdcaa" fill-opacity="1.00"/><rect x="940" y="127" width="1" height="2" fill="#dcdcaa" fill-opacity="1.00"/><rect x="941" y="127" width="1" height="2" fill="#dcdcaa" fill-opacity="1.00"/><rect x="942" y="127" width="1" height="2" fill="#dcdcaa" fill-opacity="1.00"/><rect x="928" y="129" width="1" height="2" fill="#c586c0" fill-opacity="1.00"/><rect x="929" y="129" width="1" height="2" fill="#c586c0" fill-opacity="1.00"/><rect x="930" y="129" width="1" height="2" fill="#c586c0" fill-opacity="1.00"/><rect x="931" y="129" width="1" height="2" fill="#c586c0" fill-opacity="1.00"/><rect x="932" y="129" width="1" height="2" fill="#c586c0" fill-opacity="1.00"/><rect x="933" y="129" width="1" height="2" fill="#c586c0" fill-opacity="1.00"/><rect x="924" y="131" width="1" height="2" fill="#d4d4d4" fill-opacity="0.60"/><rect x="924" y="133" width="1" height="2" fill="#9cdcfe" fill-opacity="1.00"/><rect x="925" y="133" width="1" height="2" fill="#d4d4d4" fill-opacity="0.35"/><rect x="926" y="133" width="1" height="2" fill="#dcdcaa" fill-opacity="1.00"/><rect x="927" y="133" width="1" height="2" fill="#dcdcaa" fill-opacity="1.00"/><rect x="928" y="133" width="1" height="2" fill="#dcdcaa" fill-opacity="1.00"/><rect x="929" y="133" width="1" height="2" fill="#dcdcaa" fill-opacity="1.00"/><rect x="930" y="133" width="1" height="2" fill="#d4d4d4" fill-opacity="0.60"/><rect x="931" y="133" width="1" height="2" fill="#d4d4d4" fill-opacity="0.60"/><rect x="920" y="135" width="1" height="2" fill="#d4d4d4" fill-opacity="0.60"/><rect x="916" y="137" width="1" height="2" fill="#d4d4d4" fill-opacity="0.60"/></g></svg>
<div class="box" style="left:122px;top:409px;width:720px;height:86px"></div>
<div class="box" style="left:120px;top:505px;width:487px;height:85px"></div>
<div class="box" style="left:127px;top:583px;width:360px;height:101px"></div>
</body></html>
